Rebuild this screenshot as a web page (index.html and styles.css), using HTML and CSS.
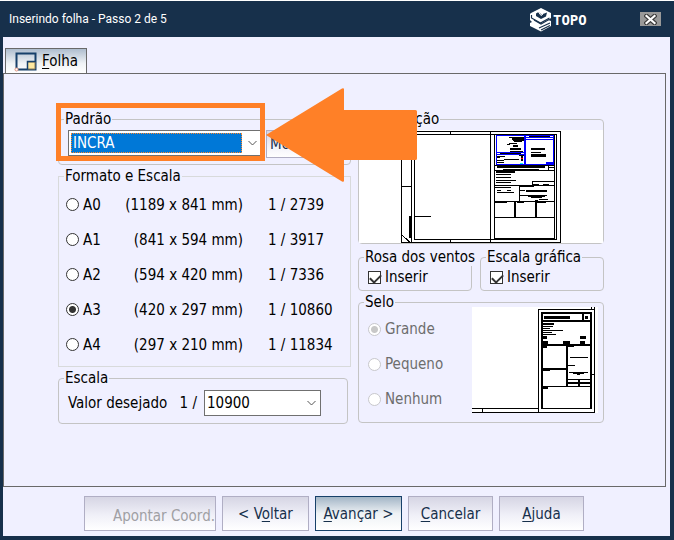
FILE: index.html
```html
<!DOCTYPE html>
<html lang="pt-BR">
<head>
<meta charset="utf-8">
<meta name="viewport" content="width=device-width, initial-scale=1">
<title>Inserindo folha - Passo 2 de 5</title>
<link rel="stylesheet" href="styles.css">
</head>
<body>
<div class="window">
  <header class="titlebar">
    <h1 class="title">Inserindo folha - Passo 2 de 5</h1>
    <div class="brand">
      <svg class="brand-mark" width="22" height="24" viewBox="0 0 22 24" aria-hidden="true">
        <path d="M1 5 11 0l10 5v5l-3 2 3 1v5l-10 5.500L0 18v-3l2-1-2-2V6z" fill="#fff"/>
        <path d="M1.500 7v3l9 5 9-5" fill="none" stroke="#17304b" stroke-width="1.200"/>
        <path d="M6 5.500 8.500 4l3 2.500L17 4.500l-1 4L11 11 6 8z" fill="#17304b"/>
        <path d="M8.500 4 11 7.500 13 6" fill="none" stroke="#fff"/>
        <path d="m4 12 7 4 8-4.500M9 20l11-5M11 22l9-4.500" fill="none" stroke="#17304b" stroke-width="1.200"/>
      </svg>
      <span>TOPO</span>
    </div>
    <button class="close" type="button" aria-label="Fechar">
      <svg width="13" height="11" viewBox="0 0 13 11" aria-hidden="true">
        <path d="m2.500 2 8 7m0-7-8 7" stroke="#3c3c3c" stroke-width="4.500" stroke-linecap="square"/>
        <path d="m2.500 2 8 7m0-7-8 7" stroke="#fff" stroke-width="2.200" stroke-linecap="square"/>
      </svg>
    </button>
  </header>

  <main class="client">
    <div class="tabs" role="tablist">
      <button class="tab" type="button" role="tab" aria-selected="true">
        <svg width="24" height="21" viewBox="0 0 24 21" aria-hidden="true">
          <path d="M2.500 17V2.500h19v16H4" fill="none" stroke="#17406a" stroke-width="2"/>
          <path d="M13.500 18v-7H21v7z" fill="#ffe9a0" stroke="#8b7a58"/>
          <path d="M13.500 18.500v-8H21" fill="none" stroke="#17406a" stroke-width="1.500"/>
          <circle cx="2.500" cy="18.500" r="1.500" fill="#fff" stroke="#e09078"/>
        </svg>
        <span><u>F</u>olha</span>
      </button>
    </div>

    <form class="panel" id="sheet">
      <div class="column">
        <fieldset class="group">
          <legend>Padrão</legend>
          <div class="pattern-row">
            <div class="combo combo-pattern">
              <select class="selected" aria-label="Padrão"><option>INCRA</option></select>
              <svg class="chevron" width="9" height="6" viewBox="0 0 9 6" aria-hidden="true"><path d="m.5 1 4 4 4-4"/></svg>
            </div>
            <button class="button models" type="button">Mod.</button>
          </div>
        </fieldset>

        <fieldset class="group formats">
          <legend>Formato e Escala</legend>
          <label class="format"><input type="radio" name="format"><span>A0</span><span class="size">(1189 x 841 mm)</span><span>1 / 2739</span></label>
          <label class="format"><input type="radio" name="format"><span>A1</span><span class="size">(841 x 594 mm)</span><span>1 / 3917</span></label>
          <label class="format"><input type="radio" name="format"><span>A2</span><span class="size">(594 x 420 mm)</span><span>1 / 7336</span></label>
          <label class="format"><input type="radio" name="format" checked><span>A3</span><span class="size">(420 x 297 mm)</span><span>1 / 10860</span></label>
          <label class="format"><input type="radio" name="format"><span>A4</span><span class="size">(297 x 210 mm)</span><span>1 / 11834</span></label>
        </fieldset>

        <fieldset class="group scale">
          <legend>Escala</legend>
          <div class="scale-row">
            <label for="scale">Valor desejado</label>
            <span class="ratio">1 /</span>
            <div class="combo combo-scale">
              <select id="scale"><option>10900</option></select>
              <svg class="chevron" width="9" height="6" viewBox="0 0 9 6" aria-hidden="true"><path d="m.5 1 4 4 4-4"/></svg>
            </div>
          </div>
        </fieldset>
      </div>

      <div class="column">
        <fieldset class="group">
          <legend>Orientação</legend>
          <svg class="drawing" viewBox="359 130 243 113" preserveAspectRatio="xMinYMin meet" shape-rendering="crispEdges" role="img" aria-label="Folha">
            <g fill="none" stroke="#000">
              <path d="M401.500 131.500h158v111h-158zM411.500 131v111M414.500 134.500h141v105h-141zM489.500 131v111M401 186.500h10M414 216.500h17M450.500 131v3M450.500 239v3M401 234l9 8"/>
              <path d="M410 216v22" stroke-width="2"/>
            </g>
            <g transform="translate(480 100) scale(.33333)">
              <path d="M40 103h3v312h-3zM219 103h3v312h-3zM40 413h182v4H40zM40 195h182v3H40zM40 210h182v3H40zM40 255h182v3H40zM40 303h182v3H40zM40 351h182v3H40zM114 257h3v48h-3zM99 305h6v47h-6zM162 305h6v47h-6zM48 198h144v6H48zM66 207h108v4H66zM201 198h3v12h-3zM201 201h20v3h-20zM45 213h57v6H45zM45 222h45v3H45zM45 231h45v3H45zM45 240h60v3H45zM45 246h45v3H45zM153 243h68v3h-68zM153 243h3v14h-3zM156 252h18v3h-18zM186 252h18v3h-18zM42 261h48v3H42zM48 270h12v3H48zM78 270h12v3H78zM48 276h51v3H48zM117 258h42v3h-42zM117 270h15v3h-15zM135 270h63v6h-63zM117 285h81v3h-81zM141 288h51v3h-51zM150 291h33v3h-33zM174 297h27v3h-27zM162 300h9v4h-9zM42 306h36v3H42zM108 306h21v3h-21zM168 306h27v3h-27z"/>
              <path d="M45 105h175v90H45z" fill="#fff"/>
              <path d="M46.500 106.500h172v87h-172zM132 106v87M46 157.500h86M46 163.500h86M134 112.500h84M134 118.500h84" fill="none" stroke="#00f" stroke-width="3"/>
              <path d="M130 106h5v87h-5zM195 186h23v8h-23z" fill="#00f"/>
              <path d="M84 111h45v3H84zM93 114h36v6H93zM96 120h34v3H96zM99 123h24v4H99zM84 129h24v3H84zM78 132h9v3h-9zM96 135h15v5H96zM87 144h33v6H87zM87 153h39v3H87zM57 158h63v4H57zM48 168h24v3H48zM48 171h9v3h-9zM69 177h45v3H69zM48 180h21v3H48zM48 186h21v3H48zM120 166h7v18h-7zM114 165h15v3h-15zM144 107h63v4h-63zM150 144h42v6h-42zM150 156h30v3h-30zM150 162h45v9h-45z"/>
              <path d="M120 173h6v5h-6z" fill="red"/><path d="M117 189h9v4h-9z" fill="#0ff"/>
            </g>
          </svg>
        </fieldset>

        <div class="pair">
          <fieldset class="group check">
            <legend>Rosa dos ventos</legend>
            <label><input type="checkbox" checked>Inserir</label>
          </fieldset>
          <fieldset class="group check">
            <legend>Escala gráfica</legend>
            <label><input type="checkbox" checked>Inserir</label>
          </fieldset>
        </div>

        <fieldset class="group">
          <legend>Selo</legend>
          <div class="stamp-row">
            <div class="stamp-options">
              <label><input type="radio" name="stamp" checked disabled>Grande</label>
              <label><input type="radio" name="stamp" disabled>Pequeno</label>
              <label><input type="radio" name="stamp" disabled>Nenhum</label>
            </div>
            <svg class="stamp-drawing" width="126" height="106" viewBox="366 186 378 318" shape-rendering="crispEdges" role="img" aria-label="Selo">
              <path d="M366 186h378v318H366z" fill="#fff"/>
              <path d="M564 192h171v3H564zM564 192h3v309h-3zM732 186h3v315h-3zM723 186h3v9h-3zM366 489h198v3H366zM366 501h369v3H366zM396 489h3v12h-3zM724 387h10v3h-10z"/>
              <path d="M573 201h153v6H573zM573 201h6v291h-6zM720 201h6v291h-6zM573 489h153v3H573zM573 225h153v6H573zM696 207h5v18h-5zM582 213h78v9h-78zM705 213h9v9h-9zM573 297h153v6H573zM648 300h6v123h-6zM573 369h78v5h-78zM573 423h153v4H573zM651 402h72v3h-72zM651 411h72v5h-72zM684 402h6v24h-6z"/>
              <path d="M579 234h33v6h-33zM579 243h30v3h-30zM579 249h21v3h-21zM579 255h60v3h-60zM579 261h27v3h-27zM579 267h39v3h-39zM579 273h12v9h-12zM579 288h15v12h-15zM639 288h21v12h-21zM690 273h18v9h-18zM690 288h15v12h-15zM579 303h12v6h-12zM654 303h18v3h-18zM660 336h54v3h-54zM654 360h21v3h-21zM657 381h57v3h-57zM669 384h33v3h-33zM681 387h9v3h-9zM579 374h21v4h-21zM579 427h15v5h-15z"/>
            </svg>
          </div>
        </fieldset>
      </div>

      <svg class="callout" width="362" height="96" viewBox="56 87 362 96" aria-hidden="true">
        <path d="M58.500 105.500h204v53h-204z" fill="none" stroke="#ff8027" stroke-width="5"/>
        <path d="M266 135 342 88.500q2-1 2 1V110h71.500q1.500 0 1.500 1.500v47q0 1.500-1.500 1.500H344v20.500q0 2-2 1z" fill="#ff8027"/>
      </svg>
    </form>

    <footer class="actions">
      <button class="button point" type="button" disabled>Apontar Coord.</button>
      <button class="button" type="button"><span>&lt; V<u>o</u>ltar</span></button>
      <button class="button primary" type="submit" form="sheet"><span><u>A</u>vançar &gt;</span></button>
      <button class="button" type="button"><span><u>C</u>ancelar</span></button>
      <button class="button" type="button"><span><u>A</u>juda</span></button>
    </footer>
  </main>
</div>
</body>
</html>
```
FILE: styles.css
```css
* {
  box-sizing: border-box;
}

body {
  margin: 0;
  color: #000;
  font: 15px/18px "DejaVu Sans Condensed", Tahoma, "DejaVu Sans", sans-serif;
}

button,
select,
input {
  margin: 0;
  color: inherit;
  font: inherit;
}

.window {
  display: flex;
  flex-direction: column;
  min-height: 100vh;
  padding: 0 4px 4px 3px;
  background: #17304b;
  border-top: 1px solid #fff;
}

.titlebar {
  display: grid;
  grid-template-columns: 527px 1fr auto;
  align-items: center;
  height: 36px;
  padding-right: 9px;
  color: #fff;
}

.title {
  margin: 0;
  padding-left: 6px;
  font: 12px/18px Roboto, sans-serif;
}

.brand {
  display: flex;
  align-items: center;
  gap: 1px;
  padding-top: 2px;
  font: bold 14px/24px "DejaVu Sans Mono", monospace;
}

.close {
  display: grid;
  place-items: center;
  width: 21px;
  height: 14px;
  padding: 0;
  background: #999;
  border: 0;
}

.client {
  display: flex;
  flex: 1;
  flex-direction: column;
  background: #f0f0ff;
}

.tabs {
  display: flex;
  padding: 11px 2px 0;
}

.tab {
  display: flex;
  gap: 4px;
  align-items: center;
  height: 25px;
  padding: 0 8px;
  background: linear-gradient(#aebdce, #f0f3f6 60%, #fff);
  border: 1px solid #696969;
  border-bottom: 0;
}

.panel {
  position: relative;
  display: grid;
  flex: 1;
  grid-template-columns: minmax(0, 293fr) minmax(0, 246fr);
  gap: 7px;
  align-items: start;
  margin-right: 4px;
  padding: 36px 61px 0 54px;
  border: 1px solid #696969;
}

.column {
  display: flex;
  flex-direction: column;
  gap: 2px;
}

.group {
  min-width: 0;
  margin: 0;
  padding: 0;
  border: 1px solid #c4c4c4;
  border-radius: 4px;
}

.group legend {
  margin-left: 5px;
  padding: 0 1px;
  white-space: nowrap;
}

.pattern-row {
  display: flex;
  gap: 4px;
  padding: 2px 7px 6px 9px;
}

.combo {
  display: flex;
  align-items: center;
  height: 26px;
  padding: 2px 4px 2px 2px;
  background: #fff;
  border: 1px solid #707070;
}

.combo select {
  flex: 1;
  min-width: 0;
  height: 20px;
  padding: 0;
  appearance: none;
  background: none;
  border: 0;
}

.combo .selected {
  padding-left: 1px;
  color: #fff;
  background: #0078d7;
  border: 1px dotted #ff8728;
}

.combo-pattern {
  flex: 0 1 194px;
}

.combo-pattern .chevron {
  margin-left: 6px;
}

.chevron {
  flex: none;
  fill: none;
  stroke: #555;
}

.button {
  height: 35px;
  padding: 0;
  color: #17304b;
  background: linear-gradient(#d6d5e4, #f0f0f8 55%, #fff);
  border: 1px solid #b0aec4;
}

.models {
  flex: 1;
  height: 28px;
  padding-left: 3px;
  text-align: left;
}

.formats {
  padding: 2px 0 4px;
  border-color: #d8dadb;
  border-radius: 0;
}

.format {
  display: grid;
  grid-template-columns: 13px 24px 132px 1fr;
  column-gap: 4px;
  align-items: center;
  height: 35px;
  padding-left: 7px;
  white-space: nowrap;
}

.format .size {
  text-align: right;
}

.format span:last-child {
  padding-left: 21px;
}

input[type="radio"] {
  flex: none;
  width: 13px;
  height: 13px;
  appearance: none;
  background: #fff;
  border: 1px solid #333;
  border-radius: 50%;
}

input[type="radio"]:checked {
  background: radial-gradient(circle, #333 3px, #fff 4px);
}

input[type="radio"]:disabled {
  border-color: #c8c8cc;
}

input[type="radio"]:disabled:checked {
  background: radial-gradient(circle, #c8c8c8 3px, #fff 4px);
}

.scale {
  margin-right: 3px;
}

.scale-row {
  display: flex;
  align-items: center;
  padding: 3px 26px 7px 9px;
}

.ratio {
  margin: 0 7px 0 auto;
}

.combo-scale {
  flex: 0 0 117px;
}

.drawing {
  display: block;
  width: 100%;
  margin-top: 2px;
  background: #fff;
}

.pair {
  display: grid;
  grid-template-columns: minmax(0, 114fr) minmax(0, 124fr);
  gap: 8px;
  padding-top: 2px;
}

.check label,
.stamp-options label {
  display: flex;
  gap: 4px;
  align-items: center;
}

.check label {
  padding: 2px 9px 4px;
}

input[type="checkbox"] {
  width: 13px;
  height: 13px;
  appearance: none;
  background: #fff;
  border: 1px solid #333;
}

input[type="checkbox"]:checked::before {
  display: block;
  width: 9px;
  height: 5px;
  margin: 2px 1px;
  border: solid #333;
  border-width: 0 0 2px 2px;
  content: "";
  transform: rotate(-45deg);
}

.stamp-row {
  display: flex;
  justify-content: space-between;
  padding: 0 5px 9px 9px;
}

.stamp-options {
  display: flex;
  flex-direction: column;
  gap: 17px;
  padding-top: 9px;
  color: #6d6d6d;
}

.stamp-drawing {
  margin-top: -4px;
}

.callout {
  position: absolute;
  top: 13px;
  left: 52px;
}

.actions {
  display: grid;
  grid-template-columns: 132px 87px 87px 85px 85px;
  gap: 6px;
  padding: 9px 0 5px 81px;
}

.point {
  padding-top: 4px;
  color: #a0a0a4;
  text-align: right;
}

.primary {
  background: linear-gradient(#a3b5c6, #eef2f5 50%, #fff);
  border-color: #17406a;
}

u {
  text-underline-offset: 2px;
}
```
